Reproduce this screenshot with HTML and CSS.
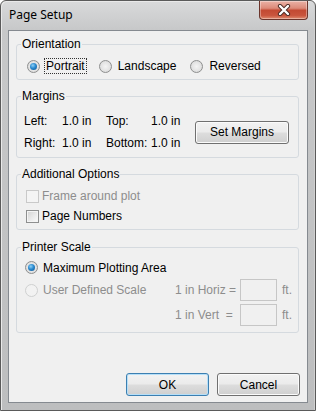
FILE: index.html
```html
<!DOCTYPE html>
<html>
<head>
<meta charset="utf-8">
<link rel="stylesheet" href="styles.css">
</head>
<body>
<div class="window">
  <div class="titlebar">
    <span class="title">Page Setup</span>
    <div class="close">
      <svg width="16" height="12" viewBox="0 0 16 12">
        <path d="M4 2 L12 10 M12 2 L4 10" stroke="#4a2a24" stroke-width="4.2" stroke-linecap="round"/>
        <path d="M4 2 L12 10 M12 2 L4 10" stroke="#ffffff" stroke-width="2.4" stroke-linecap="round"/>
      </svg>
    </div>
  </div>
  <div class="client">
    <fieldset class="group g-orient">
      <legend>Orientation</legend>
      <div class="radio-row">
        <label class="opt"><span class="radio checked"></span><span class="lbl focus">Portrait</span></label>
        <label class="opt"><span class="radio"></span><span class="lbl">Landscape</span></label>
        <label class="opt"><span class="radio"></span><span class="lbl">Reversed</span></label>
      </div>
    </fieldset>

    <fieldset class="group g-margins">
      <legend>Margins</legend>
      <div class="margins-body">
        <div class="mgrid">
          <span>Left:</span><span>1.0 in</span><span>Top:</span><span>1.0 in</span>
          <span>Right:</span><span>1.0 in</span><span>Bottom:</span><span>1.0 in</span>
        </div>
        <button class="btn set-margins">Set Margins</button>
      </div>
    </fieldset>

    <fieldset class="group g-options">
      <legend>Additional Options</legend>
      <div class="checks">
        <label class="chk disabled"><span class="box"></span><span>Frame around plot</span></label>
        <label class="chk"><span class="box"></span><span>Page Numbers</span></label>
      </div>
    </fieldset>

    <fieldset class="group g-scale">
      <legend>Printer Scale</legend>
      <div class="sgrid">
        <label class="opt2 span-all"><span class="radio checked"></span><span>Maximum Plotting Area</span></label>
        <label class="opt2 disabled"><span class="radio disabled-r"></span><span>User Defined Scale</span></label>
        <span class="dis">1 in Horiz =</span>
        <span class="field"></span>
        <span class="dis">ft.</span>
        <span></span>
        <span class="dis">1 in Vert&nbsp; =</span>
        <span class="field"></span>
        <span class="dis">ft.</span>
      </div>
    </fieldset>

    <div class="actions">
      <button class="btn default">OK</button>
      <button class="btn">Cancel</button>
    </div>
  </div>
</div>
</body>
</html>
```
FILE: styles.css
```css
html, body {
  margin: 0;
  padding: 0;
  background: #ffffff;
}
body {
  width: 316px;
  height: 411px;
  font-family: "Liberation Sans", Arial, sans-serif;
  font-size: 12px;
  color: #000;
}
.window {
  box-sizing: border-box;
  width: 316px;
  height: 411px;
  border: 1px solid #5a5a5a;
  border-radius: 6px 6px 0 0;
  background: linear-gradient(to bottom, #d9dadb 0px, #c7c8c9 29px, #bdbebf 100%);
  padding: 0 7px 7px 7px;
  display: flex;
  flex-direction: column;
  box-shadow: inset 1px 1px 0 #e9e9e9, inset -1px 0 0 #d0d0d0;
}
.titlebar {
  height: 29px;
  display: flex;
  justify-content: space-between;
  align-items: flex-start;
}
.title {
  font-family: "Noto Sans", "Open Sans", sans-serif;
  font-size: 12px;
  line-height: 16px;
  margin-top: 6px;
  margin-left: 1px;
  color: #000;
}
.close {
  width: 47px;
  height: 18px;
  border: 1px solid #6b352c;
  border-top: none;
  border-radius: 0 0 4px 4px;
  background: linear-gradient(to bottom, #eab2a6 0%, #dc8a79 40%, #c34a33 52%, #c9553d 80%, #e08c70 100%);
  display: flex;
  align-items: center;
  justify-content: center;
  box-shadow: inset 0 0 0 1px rgba(255,255,255,0.35);
}
.close svg { display: block; }
.client {
  flex: 1;
  background: #f0f0f0;
  border: 1px solid #858a90;
  display: flex;
  flex-direction: column;
}
.group {
  margin: 0 8px 0 7px;
  padding: 0;
  border: 1px solid #d5dadf;
  border-radius: 3px;
  min-inline-size: auto;
}
.group legend {
  padding: 0 1px;
  margin-left: 4px;
  line-height: 14px;
  font-size: 12px;
  color: #000;
}
.g-orient { margin-top: 6px; }
.g-margins { margin-top: 9px; }
.g-options { margin-top: 9px; }
.g-scale { margin-top: 10px; }

/* radios */
.radio {
  box-sizing: border-box;
  width: 13px;
  height: 13px;
  border-radius: 50%;
  border: 1px solid #8e8f8f;
  background: radial-gradient(circle at 50% 50%, #f4f4f4 0, #e2e2e2 60%, #cfcfcf 100%);
  position: relative;
  flex: none;
}
.radio.checked::after {
  content: "";
  position: absolute;
  left: 2px;
  top: 2px;
  width: 7px;
  height: 7px;
  border-radius: 50%;
  background: radial-gradient(circle at 40% 35%, #8fd0f4 0, #2a8ad0 45%, #0d4f8a 100%);
}
.radio.disabled-r {
  border-color: #cfd0d0;
  background: #f2f2f2;
}

.radio-row {
  display: flex;
  padding: 7px 0 5px 10px;
  height: 16px;
  align-items: center;
}
.opt {
  display: flex;
  align-items: center;
  gap: 4px;
  margin-right: 12px;
  line-height: 14px;
}
.lbl {
  border: 1px dotted transparent;
  padding: 0 1px;
  line-height: 14px;
}
.lbl.focus { border-color: #333; }

/* margins */
.margins-body {
  display: flex;
  align-items: center;
  padding: 10px 9px 6px 7px;
}
.mgrid {
  display: grid;
  grid-template-columns: 38px 44px 45px 40px;
  row-gap: 6px;
  grid-auto-rows: 16px;
  line-height: 16px;
}
.btn {
  box-sizing: border-box;
  font-family: "Liberation Sans", Arial, sans-serif;
  font-size: 12px;
  color: #000;
  border: 1px solid #707070;
  border-radius: 3px;
  background: linear-gradient(to bottom, #f2f2f2 0%, #ebebeb 48%, #dddddd 52%, #cfcfcf 100%);
  box-shadow: inset 0 0 0 1px #fbfbfb;
  padding: 0;
  height: 23px;
}
.set-margins {
  width: 94px;
  margin-left: auto;
}

/* checks */
.checks {
  display: flex;
  flex-direction: column;
  gap: 4px;
  padding: 7px 0 5px 9px;
}
.chk {
  display: flex;
  align-items: center;
  gap: 3px;
  height: 16px;
  line-height: 16px;
}
.box {
  box-sizing: border-box;
  width: 13px;
  height: 13px;
  border: 1px solid #8e8f8f;
  background: linear-gradient(135deg, #d2d2d2 0%, #ececec 60%, #fafafa 100%);
  box-shadow: inset 0 0 0 1px #f4f4f4;
  flex: none;
}
.chk.disabled { color: #8d8d8d; }
.chk.disabled .box {
  border-color: #c9c9c9;
  background: #f4f4f4;
  box-shadow: none;
}

/* printer scale */
.sgrid {
  display: grid;
  grid-template-columns: 150px 65px 37px auto;
  grid-template-rows: 16px 22px 22px;
  row-gap: 3px;
  padding: 6px 0 6px 8px;
  align-items: center;
}
.span-all {
  grid-column: 1 / -1;
  margin-bottom: 1px;
}
.opt2 {
  display: flex;
  align-items: center;
  gap: 4px;
  line-height: 16px;
}
.opt2 span:last-child { padding-left: 1px; }
.opt2.disabled, .dis { color: #8d8d8d; }
.dis { line-height: 16px; }
.field {
  box-sizing: border-box;
  width: 37px;
  height: 22px;
  border: 1px solid #c6c6c6;
  background: #f0f0f0;
}
.sgrid .field + .dis { padding-left: 5px; }

/* actions */
.actions {
  margin-top: auto;
  display: flex;
  justify-content: flex-end;
  gap: 8px;
  padding: 0 7px 6px 0;
}
.actions .btn { width: 83px; }
.btn.default {
  border-color: #3c7fb1;
  box-shadow: inset 0 0 0 1px #b6dff8;
}
```
